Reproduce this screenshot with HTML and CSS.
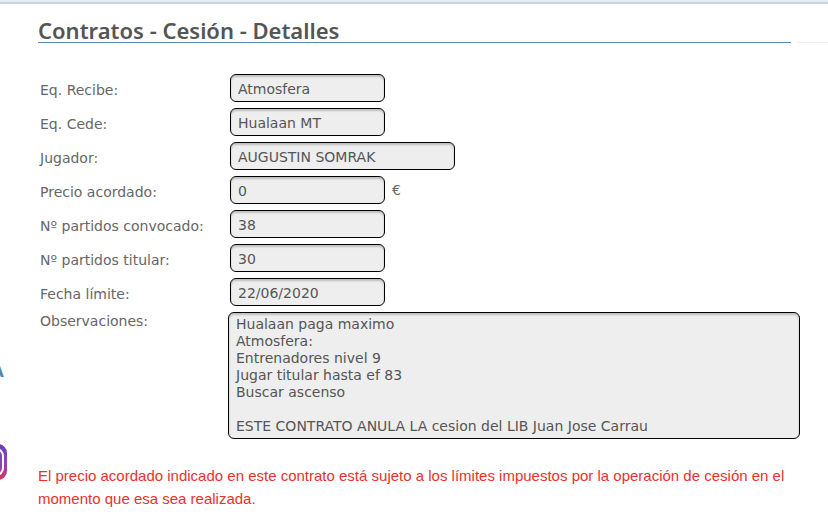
FILE: index.html
```html
<!DOCTYPE html>
<html lang="es">

<head>
    <meta charset="UTF-8">
    <meta name="viewport" content="width=device-width, initial-scale=1.0">
    <title>Contratos - Cesión - Detalles</title>
    <link rel="stylesheet" href="styles.css">
</head>

<body>

<div class="top-bar"></div>

<div class="page">
    <!-- Menú lateral -->
    <aside class="sidebar">
        <a class="menu-link" href="#">A</a>
        <a class="social-link" href="#" aria-label="Instagram">
            <svg width="36" height="38" viewBox="0 0 36 38">
                <defs>
                    <linearGradient id="insta" x1="0" y1="0" x2="0" y2="1">
                        <stop offset="0" stop-color="#6a3fb0"/>
                        <stop offset="0.5" stop-color="#8a45b8"/>
                        <stop offset="0.8" stop-color="#b8388a"/>
                        <stop offset="1" stop-color="#d8344f"/>
                    </linearGradient>
                </defs>
                <rect x="0" y="1" width="36" height="36" rx="9" fill="url(#insta)"/>
                <rect x="5" y="6" width="27" height="26" rx="7" fill="none" stroke="#fff" stroke-width="2"/>
                <circle cx="18" cy="19" r="6" fill="none" stroke="#fff" stroke-width="2"/>
                <circle cx="26" cy="12" r="2" fill="#fff"/>
            </svg>
        </a>
    </aside>

    <main class="content">
        <h1>Contratos - Cesión - Detalles</h1>

        <form class="contract">
            <label for="recibe">Eq. Recibe:</label>
            <div class="field"><input type="text" id="recibe" value="Atmosfera" readonly></div>

            <label for="cede">Eq. Cede:</label>
            <div class="field"><input type="text" id="cede" value="Hualaan MT" readonly></div>

            <label for="jugador">Jugador:</label>
            <div class="field"><input type="text" id="jugador" class="wide" value="AUGUSTIN SOMRAK" readonly></div>

            <label for="precio">Precio acordado:</label>
            <div class="field"><input type="text" id="precio" value="0" readonly><span class="unit">€</span></div>

            <label for="convocado">Nº partidos convocado:</label>
            <div class="field"><input type="text" id="convocado" value="38" readonly></div>

            <label for="titular">Nº partidos titular:</label>
            <div class="field"><input type="text" id="titular" value="30" readonly></div>

            <label for="fecha">Fecha límite:</label>
            <div class="field"><input type="text" id="fecha" value="22/06/2020" readonly></div>

            <label for="observaciones" class="label-top">Observaciones:</label>
            <textarea id="observaciones" rows="7" readonly>Hualaan paga maximo
Atmosfera:
Entrenadores nivel 9
Jugar titular hasta ef 83
Buscar ascenso

ESTE CONTRATO ANULA LA cesion del LIB Juan Jose Carrau</textarea>
        </form>

        <p class="notice">El precio acordado indicado en este contrato está sujeto a los límites impuestos por la operación de cesión en el momento que esa sea realizada.</p>
    </main>

    <div class="right-column"></div>
</div>

</body>

</html>
```

FILE: styles.css
```css
body {
    margin: 0;
    background-color: #fff;
    color: #666;
    font-family: Verdana, "DejaVu Sans", sans-serif;
    font-size: 14px;
}

.top-bar {
    height: 2px;
    background-color: #e4ebf1;
    border-bottom: 2px solid #c5d5e1;
}

.page {
    display: flex;
    align-items: flex-start;
}

/* Solo asoma el borde derecho del menú */
.sidebar {
    display: flex;
    flex-direction: column;
    align-items: flex-end;
    width: 7px;
    flex-shrink: 0;
    padding-top: 358px;
    overflow: hidden;
}

.menu-link {
    margin-right: 3px;
    color: #5a84ae;
    font-size: 16px;
    font-weight: bold;
    line-height: 20px;
    text-decoration: none;
}

.social-link {
    margin-top: 61px;
}

.social-link svg {
    display: block;
}

.content {
    flex: 1;
    min-width: 0;
    padding: 14px 0 20px 31px;
}

h1 {
    margin: 0 0 31px;
    border-bottom: 1px solid #5f83b3;
    color: #555;
    font-family: "Trebuchet MS", "Noto Sans", sans-serif;
    font-size: 22px;
    font-weight: 600;
    line-height: 24px;
}

.contract {
    display: grid;
    grid-template-columns: 190px 1fr;
    row-gap: 6px;
    align-items: center;
    margin-right: -9px;
}

.contract label {
    padding: 3px 0 0 2px;
    line-height: 18px;
}

.contract .label-top {
    align-self: start;
    padding-top: 0;
}

.field {
    display: flex;
    align-items: center;
    padding-left: 2px;
}

input,
textarea {
    box-sizing: border-box;
    border: 1px solid #000;
    border-radius: 6px;
    background-color: #eee;
    box-shadow: inset 0 2px 2px rgba(0, 0, 0, 0.2);
    color: #555;
    font-family: inherit;
    font-size: 14px;
}

input {
    width: 155px;
    height: 28px;
    padding: 1px 7px 0;
}

.wide {
    width: 225px;
}

.unit {
    margin-left: 7px;
}

textarea {
    display: block;
    width: 100%;
    padding: 3px 7px;
    line-height: 17px;
    resize: none;
    overflow: hidden;
}

.notice {
    margin: 25px 0 0;
    color: #e8322a;
    font-family: Helvetica, "Liberation Sans", sans-serif;
    font-size: 15px;
    line-height: 23px;
}

.right-column {
    width: 31px;
    margin: 38px 0 0 6px;
    border-top: 1px solid #eee;
}
```
